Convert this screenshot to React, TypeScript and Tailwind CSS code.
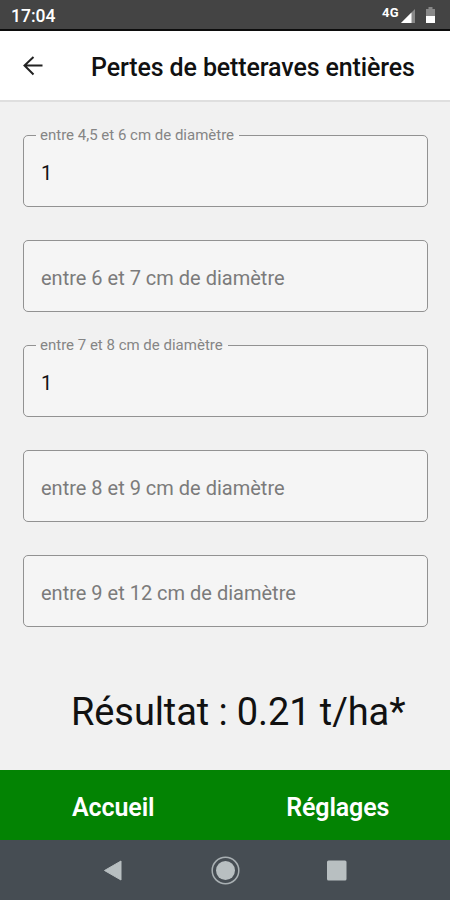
import React from "react";

const fields = [
  { label: "entre 4,5 et 6 cm de diamètre", value: "1" },
  { label: "entre 6 et 7 cm de diamètre", value: "" },
  { label: "entre 7 et 8 cm de diamètre", value: "1" },
  { label: "entre 8 et 9 cm de diamètre", value: "" },
  { label: "entre 9 et 12 cm de diamètre", value: "" },
];

export default function App() {
  return (
    <div className="flex h-[900px] w-[450px] flex-col overflow-hidden bg-[#f1f1f1] font-['Roboto',sans-serif] text-[#111111]">
      <div className="flex h-[31px] shrink-0 items-center justify-between border-b-2 border-[#0c0c0c] bg-[#444444] pr-[14px] pl-[11px] text-white">
        <span className="pt-[4px] text-[17.5px] font-medium">17:04</span>
        <div className="flex items-start pt-[2px]">
          <span className="mr-[1px] text-[13px] leading-[12px] font-bold tracking-[0.3px]">4G</span>
          <svg width="36" height="18" viewBox="0 0 36 18">
            <path d="M15 2v14H1z" fill="#888" />
            <path d="M11.500 5.500V16H1z" fill="#fff" />
            <path d="M26 2h2.500V0h4v2H35v7h-9z" fill="#888" />
            <path d="M26 9h9v7h-9z" fill="#fff" />
          </svg>
        </div>
      </div>
      <header className="flex h-[71px] shrink-0 items-center border-b-2 border-[#dfdfdf] bg-white pl-[23px]">
        <svg width="20" height="20" viewBox="0 0 20 20" fill="none" stroke="#222" strokeWidth="2">
          <path d="M19.500 9.500H2M10.500 1L1.500 9.500l9 9" />
        </svg>
        <h1 className="mt-[5px] ml-[48px] text-[25px] font-medium tracking-[-0.12px] whitespace-nowrap">Pertes de betteraves entières</h1>
      </header>
      <main className="flex flex-1 flex-col px-[23px] pt-[33px]">
        <div className="flex flex-col gap-[33px]">
          {fields.map((f) => (
            <div key={f.label} className="relative flex h-[72px] w-[405px] items-center rounded-[5px] border border-[#929292] bg-[#f5f5f5] pt-[3px] pl-[17px]">
              {f.value && (
                <span className="absolute -top-[10px] left-[12px] bg-[linear-gradient(#f1f1f1_50%,#f5f5f5_50%)] pr-[5px] pl-[4px] text-[15px] leading-[18px] whitespace-nowrap text-[#858585]">{f.label}</span>
              )}
              <span className={f.value ? "text-[20px]" : "text-[20px] text-[#7b7b7b]"}>{f.value || f.label}</span>
            </div>
          ))}
        </div>
        <p className="mt-[57px] ml-[48px] text-[38px] leading-[57px] tracking-[-0.1px] whitespace-nowrap">Résultat : 0.21 t/ha*</p>
      </main>
      <nav className="flex h-[70px] shrink-0 items-center bg-[#038303] pt-[5px] pl-[1px] text-center text-[25px] font-semibold tracking-[-0.1px] text-white">
        <span className="flex-1">Accueil</span>
        <span className="flex-1">Réglages</span>
      </nav>
      <div className="flex h-[60px] shrink-0 items-center bg-[#464d53]">
        <svg width="450" height="60" viewBox="0 0 450 60" fill="#b8bfc1">
          <path d="M104.500 30.500L121 21v19z" stroke="#b8bfc1" strokeLinejoin="round" />
          <circle cx="225.500" cy="30.500" r="13.300" fill="none" stroke="#a8afb2" strokeWidth="1.500" />
          <circle cx="225.500" cy="30.500" r="9.500" />
          <rect x="327" y="20.500" width="19.500" height="20" rx="1.500" />
        </svg>
      </div>
    </div>
  );
}
